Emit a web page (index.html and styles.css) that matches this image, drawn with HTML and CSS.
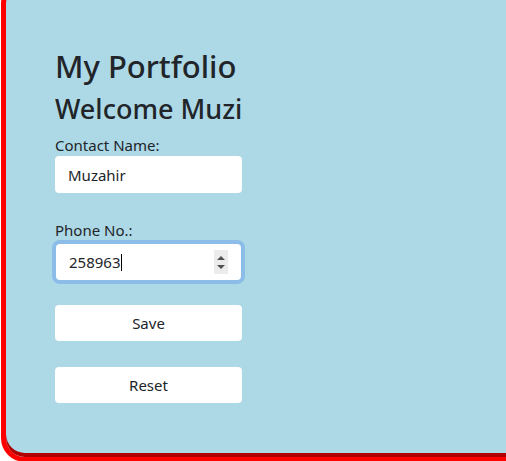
FILE: index.html
```html
<!DOCTYPE html>
<html lang="en">
<head>
<meta charset="utf-8">
<title>My Portfolio</title>
<link rel="stylesheet" href="styles.css">
</head>
<body>
<div class="card">
  <h1 class="title">My Portfolio</h1>
  <h2 class="welcome">Welcome Muzi</h2>
  <form class="form">
    <label class="label" for="name">Contact Name:</label>
    <input class="field" id="name" type="text" value="Muzahir" readonly>
    <label class="label phone-label">Phone No.:</label>
    <div class="field focused">
      <span class="value">258963</span><span class="caret"></span>
      <span class="spin"><span class="up"></span><span class="down"></span></span>
    </div>
    <button type="button" class="btn save">Save</button>
    <button type="button" class="btn reset">Reset</button>
  </form>
</div>
</body>
</html>
```
FILE: styles.css
```css
* { box-sizing: border-box; }
html, body { margin: 0; padding: 0; overflow: hidden; background: #fff; }
body { font-family: "Noto Sans", "Open Sans", sans-serif; color: #212529; }
.card {
  margin: -20px 0 0 1px;
  width: 620px;
  height: 482px;
  border: 5px solid #ff0000;
  border-radius: 24px;
  background: #add8e6;
  box-shadow: inset 0 -4px 0 #b00000;
  padding: 61px 0 0 49px;
}
.title { margin: 0; font-size: 31px; font-weight: 500; line-height: 40px; }
.welcome { margin: 6px 0 0; font-size: 27px; font-weight: 500; line-height: 34px; }
.form { display: flex; flex-direction: column; align-items: flex-start; width: 187px; }
.label { font-size: 15px; line-height: 22px; margin-top: 8px; }
.phone-label { margin-top: 26px; }
.field {
  width: 187px; height: 37px; border: 0; border-radius: 4px; background: #fff;
  font: inherit; font-size: 15px; color: #212529; padding: 0 13px;
  display: flex; align-items: center; outline: none;
}
.focused { position: relative; height: 36px; width: 185px; margin-left: 1px; margin-top: 3px; box-shadow: 0 0 0 4px #8cbde9; }
.caret { display: inline-block; width: 1px; height: 17px; background: #000; margin-left: 1px; }
.spin {
  position: absolute; right: 13px; top: 6px; width: 14px; height: 24px; background: #ececec;
  display: flex; flex-direction: column; align-items: center; justify-content: center; gap: 5px;
}
.up { width: 0; height: 0; border-left: 4px solid transparent; border-right: 4px solid transparent; border-bottom: 4px solid #505050; }
.down { width: 0; height: 0; border-left: 4px solid transparent; border-right: 4px solid transparent; border-top: 4px solid #505050; }
.btn {
  width: 187px; height: 36px; border: 0; border-radius: 4px; background: #fff;
  font: inherit; font-size: 15px; color: #212529; margin-top: 26px;
}
.save { margin-top: 25px; }
```
